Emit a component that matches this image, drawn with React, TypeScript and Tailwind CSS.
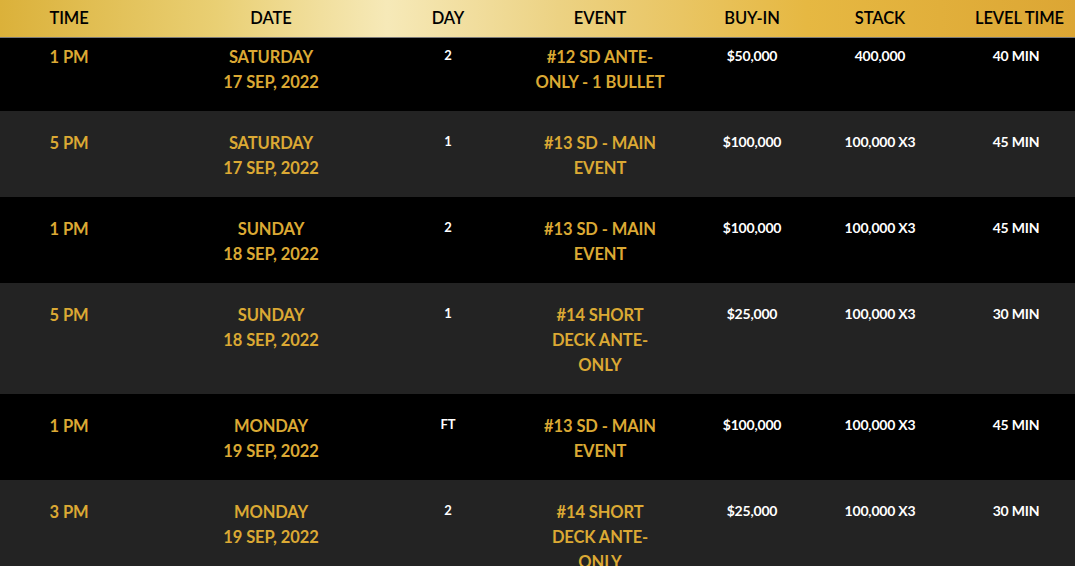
import React from "react";

type Row = {
  time: string;
  day1: string;
  date: string;
  day: string;
  event: string[];
  buyin: string;
  stack: string;
  level: string;
};

const rows: Row[] = [
  { time: "1 PM", day1: "SATURDAY", date: "17 SEP, 2022", day: "2", event: ["#12 SD ANTE-", "ONLY - 1 BULLET"], buyin: "$50,000", stack: "400,000", level: "40 MIN" },
  { time: "5 PM", day1: "SATURDAY", date: "17 SEP, 2022", day: "1", event: ["#13 SD - MAIN", "EVENT"], buyin: "$100,000", stack: "100,000 X3", level: "45 MIN" },
  { time: "1 PM", day1: "SUNDAY", date: "18 SEP, 2022", day: "2", event: ["#13 SD - MAIN", "EVENT"], buyin: "$100,000", stack: "100,000 X3", level: "45 MIN" },
  { time: "5 PM", day1: "SUNDAY", date: "18 SEP, 2022", day: "1", event: ["#14 SHORT", "DECK ANTE-", "ONLY"], buyin: "$25,000", stack: "100,000 X3", level: "30 MIN" },
  { time: "1 PM", day1: "MONDAY", date: "19 SEP, 2022", day: "FT", event: ["#13 SD - MAIN", "EVENT"], buyin: "$100,000", stack: "100,000 X3", level: "45 MIN" },
  { time: "3 PM", day1: "MONDAY", date: "19 SEP, 2022", day: "2", event: ["#14 SHORT", "DECK ANTE-", "ONLY"], buyin: "$25,000", stack: "100,000 X3", level: "30 MIN" },
];

const cols = "grid grid-cols-[138px_266px_88px_216px_88px_168px_104px]";
const gold = "mt-[2px] text-[16.5px] leading-[25px] font-bold text-[#dba934] tracking-[-0.1px]";
const white = "text-[14px] leading-[25px] font-bold text-white tracking-[-0.2px]";

export default function App() {
  return (
    <div
      className="w-[1075px] h-[566px] overflow-hidden bg-black"
      style={{ fontFamily: "Lato, 'Open Sans', sans-serif" }}
    >
      <div className="relative z-10 h-[38px] border-b border-[#7a7a7a] bg-[linear-gradient(90deg,#dbb13a_0%,#e9cf73_20%,#f6e9b8_36%,#ecd283_52%,#e6b842_75%,#dca634_100%)]">
        <div className={`${cols} h-[37px] items-center text-[16.5px] font-semibold text-black tracking-[-0.1px]`}>
          <div className="text-center">TIME</div>
          <div className="text-center">DATE</div>
          <div className="text-center">DAY</div>
          <div className="text-center">EVENT</div>
          <div className="text-center">BUY-IN</div>
          <div className="text-center">STACK</div>
          <div className="text-center whitespace-nowrap pl-[7px]">LEVEL TIME</div>
        </div>
      </div>
      {rows.map((r, i) => (
        <div
          key={i}
          className={`${cols} ${i % 2 === 0 ? "bg-black" : "bg-[#232323]"} ${i === 0 ? "pt-[5px]" : "pt-[18px]"} pb-[16px] items-start text-center`}
        >
          <div className={gold}>{r.time}</div>
          <div className={gold}>
            <div>{r.day1}</div>
            <div>{r.date}</div>
          </div>
          <div className="text-[13px] leading-[25px] font-bold text-white">{r.day}</div>
          <div className={gold}>
            {r.event.map((l, j) => (
              <div key={j}>{l}</div>
            ))}
          </div>
          <div className={white}>{r.buyin}</div>
          <div className={white}>{r.stack}</div>
          <div className={white}>{r.level}</div>
        </div>
      ))}
    </div>
  );
}
